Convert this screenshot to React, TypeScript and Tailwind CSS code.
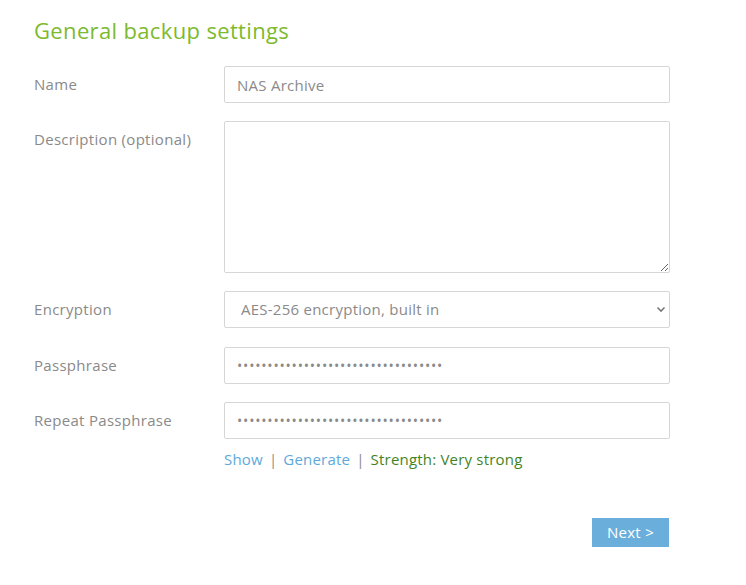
import React from "react";

const font = { fontFamily: '"Open Sans", "Noto Sans", sans-serif' };

export default function App() {
  const inputCls =
    "w-full h-[37px] border border-[#d6d6d6] rounded-[2px] px-[12px] text-[15px] tracking-[0.25px] text-[#8a8a8a] bg-white outline-none";
  const labelCls = "h-[37px] flex items-center text-[15px] tracking-[0.3px] text-[#8a8a8a]";
  return (
    <div className="w-[746px] h-[585px] bg-white" style={font}>
      <div className="pl-[34px] pt-[15px] w-[670px]">
        <h1 className="text-[22px] leading-[30px] tracking-[0.35px] text-[#7dba2d] font-normal">General backup settings</h1>
        <div className="mt-[21px] grid grid-cols-[190px_1fr] gap-y-[18px]">
          <div className={labelCls}>Name</div>
          <input className={inputCls} defaultValue="NAS Archive" />

          <div className={labelCls + " self-start"}>Description (optional)</div>
          <textarea className="w-full h-[152px] border border-[#d6d6d6] rounded-[2px] px-[12px] py-[8px] text-[15px] text-[#8a8a8a] bg-white outline-none block" />

          <div className={labelCls}>Encryption</div>
          <div className="relative">
            <select className="w-full h-[37px] appearance-none border border-[#d6d6d6] rounded-[2px] pl-[16px] pr-[30px] text-[15px] tracking-[0.25px] text-[#8a8a8a] bg-white outline-none">
              <option>AES-256 encryption, built in</option>
            </select>
            <svg className="absolute right-[4px] top-[15px] pointer-events-none" width="10" height="7" viewBox="0 0 10 7">
              <path d="M1.5 1.5 L5 5 L8.5 1.5" fill="none" stroke="#7a7a7a" strokeWidth="1.6" />
            </svg>
          </div>

          <div className={labelCls + " mt-[1px]"}>Passphrase</div>
          <input type="password" className={inputCls + " mt-[1px] !tracking-[0.8px] !text-[14px]"} defaultValue="abcdefghijklmnopqrstuvwxyz01234567" />

          <div className={labelCls}>Repeat Passphrase</div>
          <div>
            <input type="password" className={inputCls + " !tracking-[0.8px] !text-[14px]"} defaultValue="abcdefghijklmnopqrstuvwxyz01234567" />
            <div className="mt-[10px] text-[15px] tracking-[0.2px] leading-[20px] flex items-center">
              <span className="text-[#5ea9da]">Show</span>
              <span className="text-[#8a8a8a] mx-[6px]">|</span>
              <span className="text-[#5ea9da]">Generate</span>
              <span className="text-[#8a8a8a] mx-[6px]">|</span>
              <span className="text-[#43841f]">Strength: Very strong</span>
            </div>
          </div>
        </div>
        <div className="flex justify-end mt-[49px] pr-[1px]">
          <button className="w-[77px] h-[29px] bg-[#6aafdc] text-white text-[15px] tracking-[0.3px]">Next &gt;</button>
        </div>
      </div>
    </div>
  );
}
